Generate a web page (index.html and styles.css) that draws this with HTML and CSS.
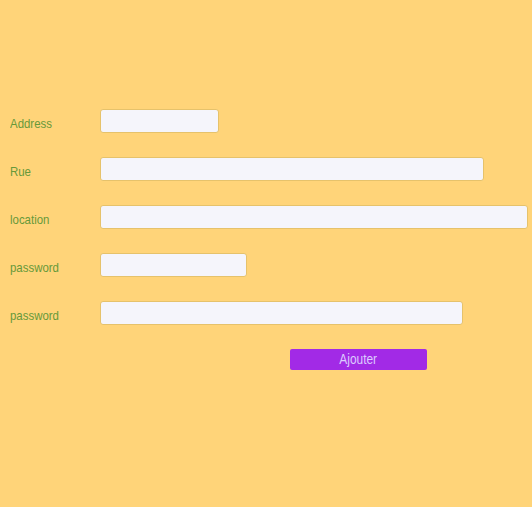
FILE: index.html
```html
<!DOCTYPE html>
<html>
<head>
<meta charset="utf-8">
<link rel="stylesheet" href="styles.css">
</head>
<body>
<form class="form">
  <div class="row"><label class="label"><span class="narrow">Address</span></label><input class="field w1" type="text"></div>
  <div class="row"><label class="label"><span class="narrow">Rue</span></label><input class="field w2" type="text"></div>
  <div class="row"><label class="label"><span class="narrow">location</span></label><input class="field w3" type="text"></div>
  <div class="row"><label class="label"><span class="narrow">password</span></label><input class="field w4" type="password"></div>
  <div class="row"><label class="label"><span class="narrow">password</span></label><input class="field w5" type="password"></div>
  <div class="actions"><button class="btn" type="button"><span class="narrow btn-text">Ajouter</span></button></div>
</form>
</body>
</html>
```
FILE: styles.css
```css
html, body {
  margin: 0;
  padding: 0;
  background: #ffd479;
  height: 100%;
}
body {
  font-family: "Liberation Sans", Arial, sans-serif;
  font-size: 13px;
}
.form {
  display: flex;
  flex-direction: column;
  gap: 24px;
  padding-top: 109px;
}
.row {
  display: flex;
  align-items: center;
  height: 24px;
}
.label {
  width: 90px;
  padding-left: 10px;
  padding-top: 5px;
  color: #67993a;
}
.narrow {
  display: inline-block;
  transform: scaleX(0.88);
  transform-origin: left center;
}
.field {
  box-sizing: border-box;
  height: 24px;
  margin: 0;
  padding: 0 4px;
  border: 1px solid #e6c26b;
  border-radius: 3px;
  background: #f5f5fb;
}
.w1 { width: 119px; }
.w2 { width: 384px; }
.w3 { width: 428px; }
.w4 { width: 147px; }
.w5 { width: 363px; }
.actions {
  padding-left: 290px;
}
.btn {
  box-sizing: border-box;
  width: 137px;
  height: 21px;
  border: none;
  border-radius: 2px;
  background: #a22ae6;
  color: #dccbff;
  font-family: "Liberation Sans", Arial, sans-serif;
  font-size: 14px;
  padding: 0;
  line-height: 21px;
}
.btn-text {
  transform: scaleX(0.85);
  transform-origin: center center;
}
```
